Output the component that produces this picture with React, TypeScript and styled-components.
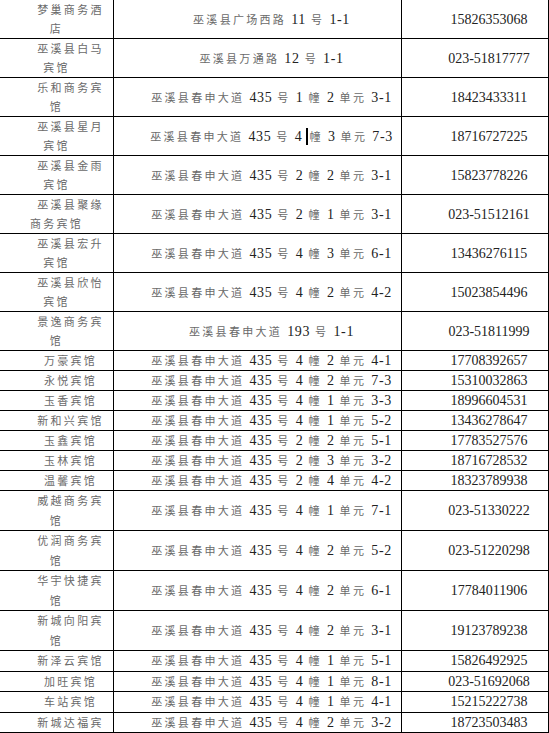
import styled, { createGlobalStyle } from "styled-components";

const GlobalStyle = createGlobalStyle`
  html, body {
    margin: 0;
    padding: 0;
    background: #ffffff;
  }
  body {
    overflow: hidden;
  }
`;

const Page = styled.div`
  width: 549px;
  height: 733px;
  overflow: hidden;
`;

const Sheet = styled.table`
  margin: -1px 0 0 -1px;
  width: 549px;
  border-collapse: collapse;
  table-layout: fixed;
`;

const Row = styled.tr<{ $loose?: boolean }>`
  line-height: ${(p) => (p.$loose ? "19.5px" : "19px")};
`;

const Cell = styled.td`
  border: 1px solid #000;
  padding: 0;
  font-size: 0;
  line-height: inherit;
  text-align: center;
  text-indent: 28px;
  vertical-align: middle;
  white-space: nowrap;
`;

const Han = styled.span`
  font-family: "Noto Sans CJK SC", sans-serif;
  font-size: 11px;
  line-height: inherit;
  vertical-align: top;
  letter-spacing: 2.3px;
  color: #6a6a6a;
`;

const Latin = styled.span`
  font-family: "Liberation Serif", serif;
  font-size: 14px;
  line-height: inherit;
  vertical-align: top;
  letter-spacing: 0.6px;
  word-spacing: 1px;
  color: #222;
`;

const Phone = styled.span`
  font-family: "Liberation Serif", serif;
  font-size: 14px;
  line-height: inherit;
  vertical-align: top;
  color: #222;
`;

const Caret = styled.span`
  display: inline-block;
  width: 2px;
  height: 17px;
  margin: 1px 1px 0 -1px;
  vertical-align: top;
  background: #000;
`;

const HAN = /([\u4e00-\u9fff]+)/;

const renderText = (text: string) =>
  text.split("^").map((chunk, c) => (
    <span key={c}>
      {c > 0 && <Caret />}
      {chunk
        .split(HAN)
        .filter(Boolean)
        .map((part, i) =>
          HAN.test(part) ? <Han key={i}>{part}</Han> : <Latin key={i}>{part}</Latin>
        )}
    </span>
  ));

const addr = (rest: string) => `巫溪县春申大道 435 号 ${rest}`;

const hotels = [
  { name: ["梦巢商务酒", "店"], address: "巫溪县广场西路 11 号 1-1", phone: "15826353068" },
  { name: ["巫溪县白马", "宾馆"], address: "巫溪县万通路 12 号 1-1", phone: "023-51817777" },
  { name: ["乐和商务宾", "馆"], address: addr("1 幢 2 单元 3-1"), phone: "18423433311" },
  { name: ["巫溪县星月", "宾馆"], address: addr("4 ^幢 3 单元 7-3"), phone: "18716727225" },
  { name: ["巫溪县金雨", "宾馆"], address: addr("2 幢 2 单元 3-1"), phone: "15823778226" },
  { name: ["巫溪县聚缘", "商务宾馆"], address: addr("2 幢 1 单元 3-1"), phone: "023-51512161" },
  { name: ["巫溪县宏升", "宾馆"], address: addr("4 幢 3 单元 6-1"), phone: "13436276115" },
  { name: ["巫溪县欣怡", "宾馆"], address: addr("4 幢 2 单元 4-2"), phone: "15023854496" },
  { name: ["景逸商务宾", "馆"], address: "巫溪县春申大道 193 号 1-1", phone: "023-51811999" },
  { name: ["万豪宾馆"], address: addr("4 幢 2 单元 4-1"), phone: "17708392657" },
  { name: ["永悦宾馆"], address: addr("4 幢 2 单元 7-3"), phone: "15310032863" },
  { name: ["玉香宾馆"], address: addr("4 幢 1 单元 3-3"), phone: "18996604531" },
  { name: ["新和兴宾馆"], address: addr("4 幢 1 单元 5-2"), phone: "13436278647" },
  { name: ["玉鑫宾馆"], address: addr("2 幢 2 单元 5-1"), phone: "17783527576" },
  { name: ["玉林宾馆"], address: addr("2 幢 3 单元 3-2"), phone: "18716728532" },
  { name: ["温馨宾馆"], address: addr("2 幢 4 单元 4-2"), phone: "18323789938" },
  { name: ["威越商务宾", "馆"], address: addr("4 幢 1 单元 7-1"), phone: "023-51330222" },
  { name: ["优润商务宾", "馆"], address: addr("4 幢 2 单元 5-2"), phone: "023-51220298" },
  { name: ["华宇快捷宾", "馆"], address: addr("4 幢 2 单元 6-1"), phone: "17784011906" },
  { name: ["新城向阳宾", "馆"], address: addr("4 幢 2 单元 3-1"), phone: "19123789238" },
  { name: ["新泽云宾馆"], address: addr("4 幢 1 单元 5-1"), phone: "15826492925" },
  { name: ["加旺宾馆"], address: addr("4 幢 1 单元 8-1"), phone: "023-51692068" },
  { name: ["车站宾馆"], address: addr("4 幢 1 单元 4-1"), phone: "15215222738" },
  { name: ["新城达福宾"], address: addr("4 幢 2 单元 3-2"), phone: "18723503483" },
];

export default function App() {
  return (
    <Page>
      <GlobalStyle />
      <Sheet>
        <colgroup>
          <col style={{ width: 114 }} />
          <col style={{ width: 288 }} />
          <col style={{ width: 147 }} />
        </colgroup>
        <tbody>
          {hotels.map((h, idx) => (
            <Row key={h.phone} $loose={idx >= 16}>
              <Cell>
                {h.name.map((line, i) => (
                  <span key={i}>
                    {i > 0 && <br />}
                    <Han>{line}</Han>
                  </span>
                ))}
              </Cell>
              <Cell>{renderText(h.address)}</Cell>
              <Cell>
                <Phone>{h.phone}</Phone>
              </Cell>
            </Row>
          ))}
        </tbody>
      </Sheet>
    </Page>
  );
}
